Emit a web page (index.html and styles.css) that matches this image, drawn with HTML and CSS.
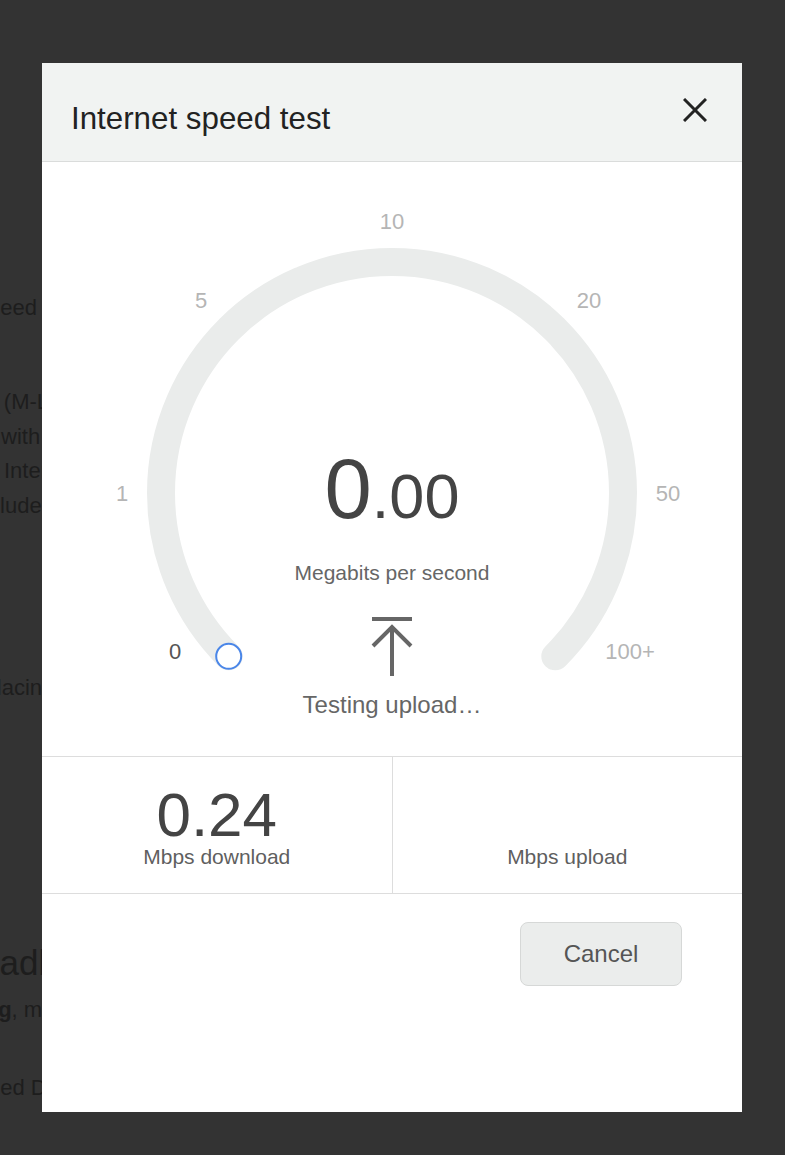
FILE: index.html
```html
<!DOCTYPE html>
<html lang="en">
<head>
<meta charset="utf-8">
<title>Internet speed test</title>
<link rel="stylesheet" href="styles.css">
</head>
<body>
<div class="page">
  <p class="bg-line l-speed">speed test</p>
  <div class="bg-para">
    <p class="bg-line l-mlab">Lab (M-Lab)</p>
    <p class="bg-line l-with">with</p>
    <p class="bg-line l-inte">Internet</p>
    <p class="bg-line l-incl">include</p>
  </div>
  <p class="bg-line l-repl">replacing</p>
  <h2 class="bg-head">Broadband</h2>
  <p class="bg-line l-test"><b>Testing</b>, m</p>
  <p class="bg-line l-data">Speed Data</p>
</div>

<div class="modal">
  <header class="modal-head">
    <h1 class="modal-title">Internet speed test</h1>
    <button class="close" aria-label="Close">
      <svg width="24" height="24" viewBox="0 0 24 24"><path d="M1 1 L23 23 M23 1 L1 23" stroke="#222" stroke-width="3" fill="none"/></svg>
    </button>
  </header>

  <section class="gauge">
    <svg class="dial" width="700" height="594" viewBox="0 0 700 594">
      <path d="M186.7 494.3 A231 231 0 1 1 513.3 494.3" fill="none" stroke="#eaeceb" stroke-width="28" stroke-linecap="round"/>
      <circle cx="186.7" cy="494.3" r="12.5" fill="#fff" stroke="#4a86e8" stroke-width="2"/>
    </svg>
    <span class="tick t-10">10</span>
    <span class="tick t-5">5</span>
    <span class="tick t-20">20</span>
    <span class="tick t-1">1</span>
    <span class="tick t-50">50</span>
    <span class="tick t-0">0</span>
    <span class="tick t-100">100+</span>

    <div class="readout"><span class="int">0</span><span class="dec">.00</span></div>
    <div class="unit">Megabits per second</div>
    <svg class="upload-icon" width="44" height="62" viewBox="0 0 44 62">
      <path d="M2 4 H42" stroke="#666" stroke-width="4" fill="none"/>
      <path d="M22 12 V61" stroke="#666" stroke-width="4" fill="none"/>
      <path d="M3 31 L22 12 L41 31" stroke="#666" stroke-width="4" fill="none" stroke-linejoin="miter"/>
    </svg>
    <div class="status">Testing upload…</div>
  </section>

  <div class="stats">
    <div class="stat">
      <div class="stat-num">0.24</div>
      <div class="stat-label">Mbps download</div>
    </div>
    <div class="stat">
      <div class="stat-num"></div>
      <div class="stat-label">Mbps upload</div>
    </div>
  </div>

  <footer class="modal-foot">
    <button class="btn">Cancel</button>
  </footer>
</div>
</body>
</html>
```

FILE: styles.css
```css
html, body {
  margin: 0;
  padding: 0;
}
body {
  width: 785px;
  height: 1155px;
  overflow: hidden;
  background: #333333;
  font-family: "Liberation Sans", Arial, sans-serif;
}

/* underlying page, dimmed */
.page {
  padding-top: 291px;
  color: #1d1d1d;
}
.bg-line {
  margin: 0;
  font-size: 22px;
  line-height: 34px;
  white-space: nowrap;
}
.bg-para {
  margin-top: 60px;
}
.bg-para .bg-line {
  line-height: 34.7px;
}
.l-speed { text-indent: -23px; }
.l-mlab { text-indent: -39px; }
.l-with { text-indent: 1px; }
.l-inte { text-indent: 4px; }
.l-incl { text-indent: -28px; }
.l-repl { text-indent: -35px; margin-top: 147px; }
.bg-head {
  margin: 236px 0 0;
  font-size: 35px;
  font-weight: normal;
  line-height: 44px;
  white-space: nowrap;
  text-indent: -55px;
}
.l-test { text-indent: -65px; margin-top: 8px; }
.l-data { text-indent: -39px; margin-top: 44px; }

/* modal */
.modal {
  position: fixed;
  top: 63px;
  left: 42px;
  width: 700px;
  height: 1049px;
  background: #ffffff;
  display: flex;
  flex-direction: column;
}
.modal-head {
  box-sizing: border-box;
  height: 99px;
  background: #f1f3f2;
  border-bottom: 1px solid #dadcdb;
  display: flex;
  justify-content: space-between;
  align-items: flex-start;
  padding: 38px 35px 0 29px;
}
.modal-title {
  margin: 0;
  font-size: 31.3px;
  font-weight: normal;
  line-height: 36px;
  color: #222222;
}
.close {
  margin-top: -3px;
  padding: 0;
  border: 0;
  background: none;
  width: 24px;
  height: 24px;
  display: block;
}
.close svg { display: block; }

.gauge {
  position: relative;
  height: 594px;
  box-sizing: border-box;
  padding-top: 284px;
  display: flex;
  flex-direction: column;
  align-items: center;
}
.dial {
  position: absolute;
  left: 0;
  top: 0;
}
.tick {
  position: absolute;
  transform: translate(-50%, -50%);
  font-size: 22px;
  line-height: 1;
  color: #b5b5b5;
}
.t-10 { left: 350px; top: 60px; }
.t-5 { left: 159px; top: 139px; }
.t-20 { left: 547px; top: 139px; }
.t-1 { left: 80px; top: 332px; }
.t-50 { left: 626px; top: 332px; }
.t-0 { left: 133px; top: 490px; color: #555555; }
.t-100 { left: 588px; top: 490px; }

.readout {
  position: relative;
  line-height: 86px;
  height: 86px;
  color: #444444;
  white-space: nowrap;
}
.readout .int { font-size: 85px; line-height: 1; }
.readout .dec { font-size: 63px; line-height: 1; }
.unit {
  position: relative;
  margin-top: 29px;
  font-size: 21px;
  line-height: 24px;
  color: #666666;
}
.upload-icon {
  position: relative;
  display: block;
  margin-top: 30px;
}
.status {
  position: relative;
  margin-top: 14px;
  font-size: 24px;
  line-height: 28px;
  color: #666666;
}

.stats {
  display: flex;
  border-top: 1px solid #dddddd;
  border-bottom: 1px solid #dddddd;
}
.stat {
  flex: 1;
  height: 136px;
  box-sizing: border-box;
  padding-top: 28px;
  display: flex;
  flex-direction: column;
  align-items: center;
}
.stat + .stat {
  border-left: 1px solid #dddddd;
}
.stat-num {
  height: 60px;
  font-size: 62px;
  line-height: 60px;
  color: #444444;
}
.stat-label {
  font-size: 21px;
  line-height: 24px;
  color: #5f5f5f;
}

.modal-foot {
  flex: 1;
  display: flex;
  justify-content: flex-end;
  align-items: flex-start;
  padding: 28px 60px 0 0;
}
.btn {
  width: 162px;
  height: 64px;
  box-sizing: border-box;
  border: 1px solid #d6d8d7;
  border-radius: 8px;
  background: #ebedec;
  font-family: "Liberation Sans", Arial, sans-serif;
  font-size: 24px;
  color: #555555;
  padding: 0;
}
```
